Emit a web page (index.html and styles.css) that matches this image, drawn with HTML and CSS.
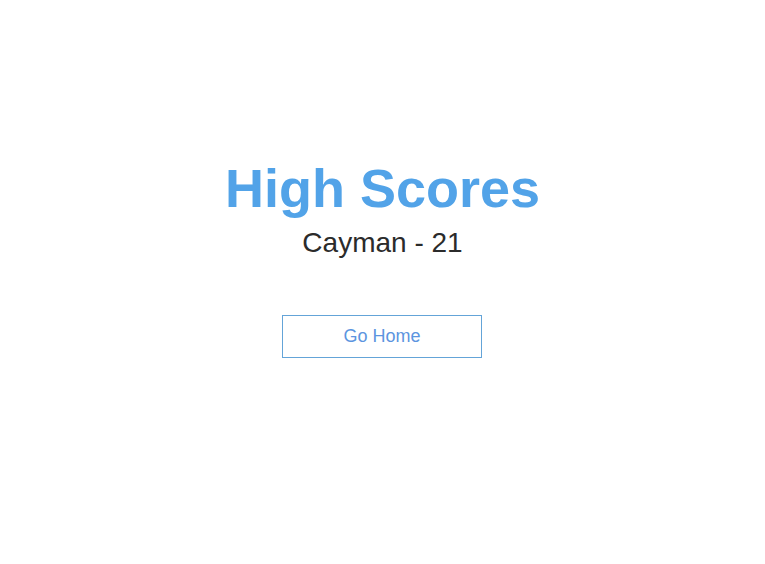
FILE: index.html
```html
<!DOCTYPE html>
<html>
<head>
<meta charset="utf-8">
<link rel="stylesheet" href="styles.css">
</head>
<body>
<main class="page">
  <h1 class="title">High Scores</h1>
  <ul class="scores">
    <li class="score">Cayman - 21</li>
  </ul>
  <button class="home-btn">Go Home</button>
</main>
</body>
</html>
```
FILE: styles.css
```css
html, body {
  margin: 0;
  padding: 0;
  background: #ffffff;
}
.page {
  display: flex;
  flex-direction: column;
  align-items: center;
  padding-top: 157px;
  font-family: "Liberation Sans", Arial, sans-serif;
}
.title {
  margin: 0;
  font-size: 54px;
  font-weight: 700;
  line-height: 62px;
  color: #52a3e8;
}
.scores {
  list-style: none;
  margin: 8px 0 0;
  padding: 0;
}
.score {
  font-size: 28px;
  line-height: 32px;
  color: #2b2b2b;
}
.home-btn {
  margin-top: 56px;
  margin-right: 1px;
  width: 200px;
  height: 43px;
  background: #ffffff;
  border: 1px solid #64a4d8;
  color: #5c95e0;
  font-family: "Liberation Sans", Arial, sans-serif;
  font-size: 18px;
  padding: 0;
}
```
